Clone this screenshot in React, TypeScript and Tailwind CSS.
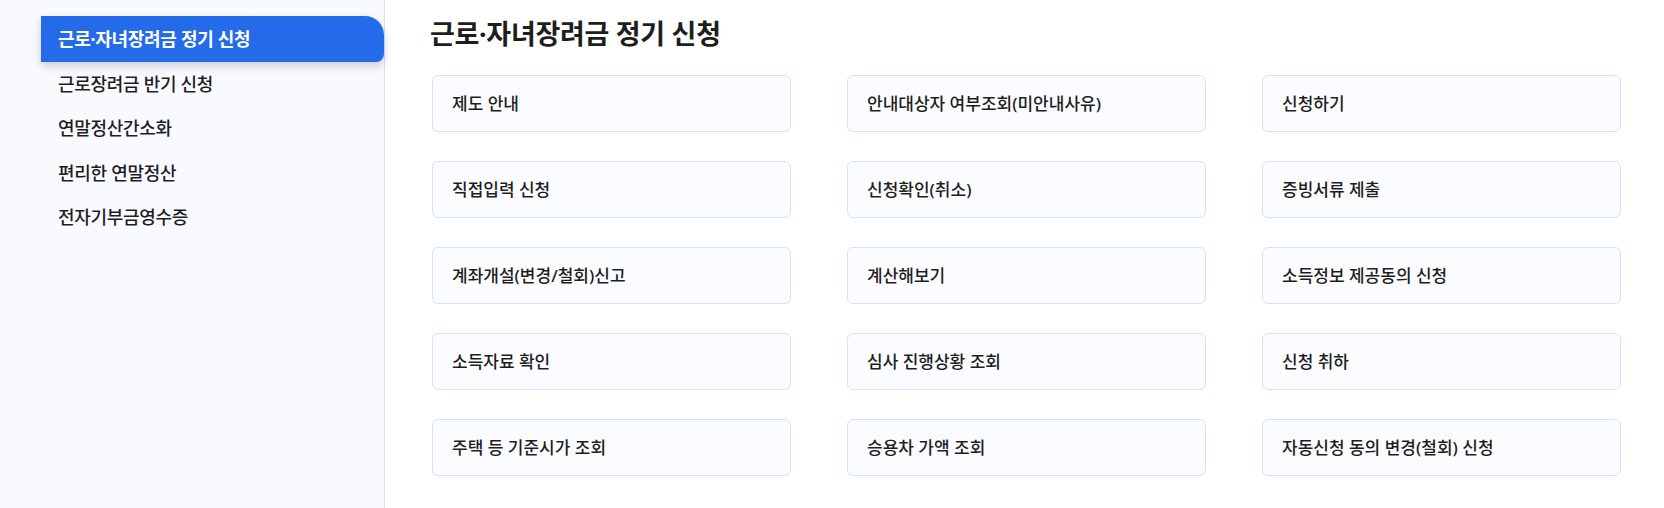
import React from 'react';

const menu = [
  '근로·자녀장려금 정기 신청',
  '근로장려금 반기 신청',
  '연말정산간소화',
  '편리한 연말정산',
  '전자기부금영수증',
];

const cards = [
  '제도 안내',
  '안내대상자 여부조회(미안내사유)',
  '신청하기',
  '직접입력 신청',
  '신청확인(취소)',
  '증빙서류 제출',
  '계좌개설(변경/철회)신고',
  '계산해보기',
  '소득정보 제공동의 신청',
  '소득자료 확인',
  '심사 진행상황 조회',
  '신청 취하',
  '주택 등 기준시가 조회',
  '승용차 가액 조회',
  '자동신청 동의 변경(철회) 신청',
];

export default function App() {
  return (
    <div
      className="flex h-[508px] w-full bg-white text-[#1e1e1e]"
      style={{ fontFamily: '"Noto Sans", "Noto Sans CJK KR", sans-serif' }}
    >
      {/* Sidebar */}
      <aside className="w-[385px] shrink-0 border-r border-[#d5e3fd] bg-[#f8faff] pt-4">
        <ul className="flex flex-col">
          {menu.map((item, i) =>
            i === 0 ? (
              <li
                key={item}
                className="ml-[41px] flex h-[46px] items-center rounded-tr-[19px] rounded-br-[8px] bg-[#246be9] pl-[17px] text-[18px] font-bold tracking-[-0.3px] text-white shadow-[0_4px_10px_rgba(0,0,0,0.18)]"
              >
                {item}
              </li>
            ) : (
              <li
                key={item}
                className="ml-[41px] flex h-[44.5px] items-center pl-[17px] text-[18px] font-medium tracking-[-0.3px]"
              >
                {item}
              </li>
            )
          )}
        </ul>
      </aside>

      {/* Main */}
      <main className="flex-1 pl-[47px]">
        <h1 className="-ml-[2px] mt-[14px] h-[40px] text-[27px] font-bold leading-[40px] tracking-[-0.3px]">
          근로·자녀장려금 정기 신청
        </h1>
        <div className="mt-[21px] grid grid-cols-[359px_359px_359px] gap-x-[56px] gap-y-[29px]">
          {cards.map((c) => (
            <div
              key={c}
              className="flex h-[57px] items-center rounded-[6px] border border-[#d3e2fd] bg-[#fbfcff] px-[19px] text-[17px] font-medium"
            >
              {c}
            </div>
          ))}
        </div>
      </main>
    </div>
  );
}
